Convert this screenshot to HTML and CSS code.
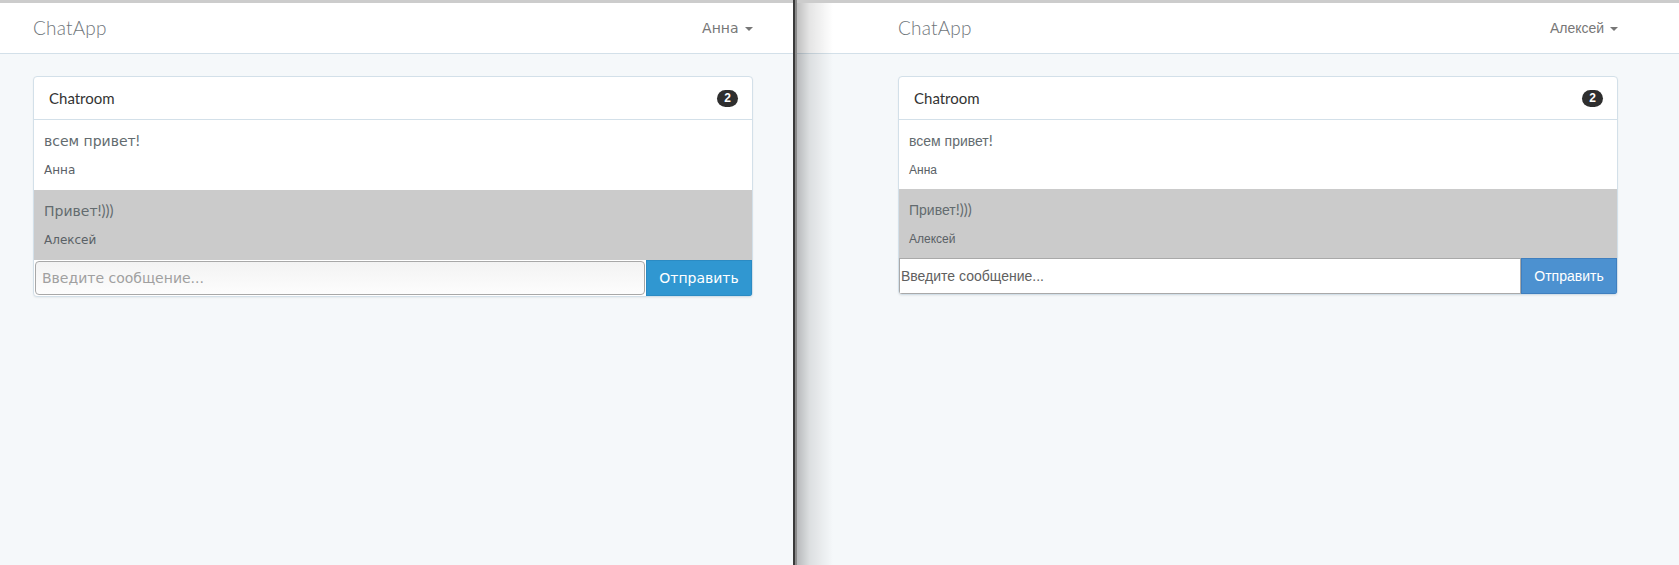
FILE: index.html
```html
<!DOCTYPE html>
<html lang="ru">
<head>
<meta charset="utf-8">
<title>ChatApp</title>
<link rel="stylesheet" href="styles.css">
</head>
<body>
<div class="screen">
  <section class="window window--a">
    <nav class="navbar">
      <div class="container nav-inner">
        <a class="brand">ChatApp</a>
        <a class="user">Анна <span class="caret"></span></a>
      </div>
    </nav>
    <main class="container">
      <div class="panel">
        <div class="panel-heading">
          <span class="title">Chatroom</span>
          <span class="badge">2</span>
        </div>
        <div class="message">
          <p class="text">всем привет<span class="lat">!</span></p>
          <p class="author">Анна</p>
        </div>
        <div class="message message--alt">
          <p class="text">Привет<span class="lat">!)))</span></p>
          <p class="author">Алексей</p>
        </div>
        <form class="composer">
          <input class="composer-input" type="text" placeholder="Введите сообщение...">
          <button class="composer-send" type="button">Отправить</button>
        </form>
      </div>
    </main>
  </section>
  <div class="divider"></div>
  <section class="window window--b">
    <nav class="navbar">
      <div class="container nav-inner">
        <a class="brand">ChatApp</a>
        <a class="user">Алексей <span class="caret"></span></a>
      </div>
    </nav>
    <main class="container">
      <div class="panel">
        <div class="panel-heading">
          <span class="title">Chatroom</span>
          <span class="badge">2</span>
        </div>
        <div class="message">
          <p class="text">всем привет<span class="lat">!</span></p>
          <p class="author">Анна</p>
        </div>
        <div class="message message--alt">
          <p class="text">Привет<span class="lat">!)))</span></p>
          <p class="author">Алексей</p>
        </div>
        <form class="composer">
          <input class="composer-input" type="text" placeholder="Введите сообщение...">
          <button class="composer-send" type="button">Отправить</button>
        </form>
      </div>
    </main>
  </section>
</div>
</body>
</html>
```

FILE: styles.css
```css
* { box-sizing: border-box; }
html, body { margin: 0; padding: 0; height: 100%; }
body { background: #f5f8fa; overflow: hidden; }

.screen { display: flex; height: 565px; }

.window {
  position: relative;
  background: #f5f8fa;
  border-top: 3px solid #cccccc;
  overflow: hidden;
}
.window--a { width: 793px; font-family: "DejaVu Sans", sans-serif; }
.window--b { flex: 1; font-family: "Liberation Sans", Arial, sans-serif; }
.window--b::before {
  content: "";
  position: absolute;
  left: 0; top: 0; bottom: 0;
  width: 36px;
  background: linear-gradient(to right, rgba(0,0,0,.25), rgba(0,0,0,.1) 35%, rgba(0,0,0,0));
  pointer-events: none;
  z-index: 2;
}

.divider {
  width: 4px;
  background: linear-gradient(to right, #3a3a3a 0, #3a3a3a 2px, #8a8a8a 2px, #8a8a8a 4px);
}

.container { width: 720px; }
.window--a .container { margin-left: 33px; }
.window--b .container { margin-left: 101px; }

.navbar {
  background: #fff;
  height: 51px;
  border-bottom: 1px solid #d3e0e9;
}
.nav-inner {
  height: 100%;
  display: flex;
  align-items: center;
  justify-content: space-between;
}
.brand {
  font-family: "Lato", sans-serif;
  font-weight: 300;
  font-size: 19px;
  letter-spacing: 0.2px;
  color: #6f767b;
  padding-bottom: 1px;
}
.user {
  font-size: 14px;
  color: #777;
}
.caret {
  display: inline-block;
  width: 0; height: 0;
  margin-left: 2px;
  vertical-align: middle;
  border-top: 4px solid #777;
  border-left: 4px solid transparent;
  border-right: 4px solid transparent;
}

.panel {
  margin-top: 22px;
  background: #fff;
  border: 1px solid #d3e0e9;
  border-radius: 4px;
  box-shadow: 0 1px 2px rgba(0,0,0,.06);
  overflow: hidden;
}
.panel-heading {
  height: 43px;
  padding: 0 14px 0 15px;
  display: flex;
  align-items: center;
  justify-content: space-between;
  border-bottom: 1px solid #d3e0e9;
}
.title {
  font-family: "Lato", sans-serif;
  font-size: 15px;
  color: #333;
}
.badge {
  min-width: 21px;
  height: 17px;
  border-radius: 9px;
  background: #2e2e2e;
  color: #fff;
  font-family: "Liberation Sans", Arial, sans-serif;
  font-size: 12px;
  font-weight: bold;
  line-height: 17px;
  text-align: center;
}

.message {
  height: 70px;
  padding: 10px 10px 0;
  background: #fff;
}
.window--b .message { height: 69px; }
.message--alt { background: #cbcbcb; }
.text {
  margin: 0;
  font-size: 14px;
  line-height: 22px;
  height: 22px;
  color: #636b6f;
}
.lat { font-family: "Lato", sans-serif; font-size: 15px; line-height: 0; }
.author {
  margin: 8px 0 0;
  font-size: 12px;
  line-height: 20px;
  color: #5a6166;
}

.composer {
  display: flex;
  margin: 0;
}
.composer-input {
  flex: 1;
  min-width: 0;
  font: inherit;
  font-size: 14px;
  outline: none;
}
.composer-send {
  font: inherit;
  font-size: 14px;
  color: #fff;
  cursor: pointer;
}

.window--a .composer-input {
  margin: 1px;
  height: 34px;
  padding: 0 6px;
  border: 1px solid #a8a8a8;
  border-radius: 4px;
  background: linear-gradient(#f3f3f3, #fdfdfd);
  color: #555;
}
.window--a .composer-input::placeholder { color: #a0a0a0; }
.window--a .composer-send {
  width: 106px;
  height: 36px;
  border: 1px solid #2b8bc3;
  background: #3097d1;
}

.window--b .composer-input {
  height: 36px;
  padding: 0 1px;
  border: 1px solid #a9a9a9;
  border-radius: 0;
  background: #fff;
  color: #555;
}
.window--b .composer-input::placeholder { color: #606060; }
.window--b .composer-send {
  width: 96px;
  height: 36px;
  border: 1px solid #3f7fbf;
  background: #4c91d0;
}
```
